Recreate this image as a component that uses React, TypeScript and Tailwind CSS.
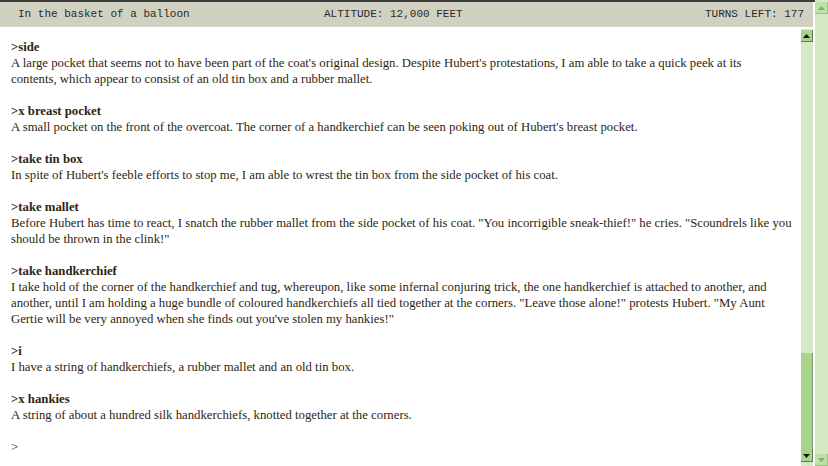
import React from "react";

type Block = { cmd: string; lines: string[] };

const blocks: Block[] = [
  {
    cmd: ">side",
    lines: [
      "A large pocket that seems not to have been part of the coat's original design. Despite Hubert's protestations, I am able to take a quick peek at its",
      "contents, which appear to consist of an old tin box and a rubber mallet.",
    ],
  },
  {
    cmd: ">x breast pocket",
    lines: [
      "A small pocket on the front of the overcoat. The corner of a handkerchief can be seen poking out of Hubert's breast pocket.",
    ],
  },
  {
    cmd: ">take tin box",
    lines: ["In spite of Hubert's feeble efforts to stop me, I am able to wrest the tin box from the side pocket of his coat."],
  },
  {
    cmd: ">take mallet",
    lines: [
      "Before Hubert has time to react, I snatch the rubber mallet from the side pocket of his coat. \"You incorrigible sneak-thief!\" he cries. \"Scoundrels like you",
      "should be thrown in the clink!\"",
    ],
  },
  {
    cmd: ">take handkerchief",
    lines: [
      "I take hold of the corner of the handkerchief and tug, whereupon, like some infernal conjuring trick, the one handkerchief is attached to another, and",
      "another, until I am holding a huge bundle of coloured handkerchiefs all tied together at the corners. \"Leave those alone!\" protests Hubert. \"My Aunt",
      "Gertie will be very annoyed when she finds out you've stolen my hankies!\"",
    ],
  },
  {
    cmd: ">i",
    lines: ["I have a string of handkerchiefs, a rubber mallet and an old tin box."],
  },
  {
    cmd: ">x hankies",
    lines: ["A string of about a hundred silk handkerchiefs, knotted together at the corners."],
  },
];

function ScrollBtn({ up, dim }: { up?: boolean; dim?: boolean }) {
  return (
    <div
      className={
        "flex items-center justify-center border-r border-b shrink-0 " +
        (dim ? "bg-[#bfe0a8] border-[#9cc487]" : "bg-[#a8d48c] border-[#5f7d52]")
      }
      style={{ width: "100%", height: 12 }}
    >
      <svg width="7" height="4" viewBox="0 0 7 4">
        {up ? (
          <polygon points="3.5,0 7,4 0,4" fill={dim ? "#7fb069" : "#111"} />
        ) : (
          <polygon points="0,0 7,0 3.5,4" fill={dim ? "#7fb069" : "#111"} />
        )}
      </svg>
    </div>
  );
}

export default function App() {
  const mono = { fontFamily: '"Liberation Mono", "Courier New", monospace' };
  const serif = { fontFamily: '"Liberation Serif", "Times New Roman", serif' };
  return (
    <div className="flex w-[828px] h-[466px] bg-white overflow-hidden">
      <div className="flex flex-col w-[815px] h-full shrink-0">
        <div className="h-[2px] bg-[#3c3c3c]" />
        <div
          className="flex items-center h-[25px] mr-[2px] bg-[#d1d1c1] text-[11px] text-[#2a2a2a]"
          style={mono}
        >
          <div className="w-[324px] pl-[18px] whitespace-pre">In the basket of a balloon</div>
          <div className="whitespace-pre">ALTITUDE: 12,000 FEET</div>
          <div className="flex-1 text-right pr-[9px] whitespace-pre">TURNS LEFT: 177</div>
        </div>
        <div className="flex flex-1 pt-[2px] min-h-0">
          <div
            className="flex-1 min-w-0 overflow-hidden pl-[11px] pt-[10px] text-[12.75px] leading-[16px] text-[#2e1f12]"
            style={serif}
          >
            {blocks.map((b, i) => (
              <div key={i} className="mb-[16px]">
                <div className="font-bold whitespace-nowrap">{b.cmd}</div>
                {b.lines.map((l, j) => (
                  <div key={j} className="whitespace-nowrap">{l}</div>
                ))}
              </div>
            ))}
            <div>&gt;</div>
          </div>
          <div className="w-[12px] shrink-0 mr-[2px] flex flex-col bg-[#d5e9c6] pt-[1px] pb-[4px]">
            <ScrollBtn up />
            <div className="flex-1" />
            <div className="h-[97px] bg-[#a8d48c] border-r border-[#7a9c6a]" />
            <ScrollBtn />
          </div>
        </div>
      </div>
      <div className="w-[13px] shrink-0 h-full flex flex-col bg-[#d5e9c6] pt-[2px]">
        <ScrollBtn up dim />
        <div className="flex-1" />
        <ScrollBtn dim />
      </div>
    </div>
  );
}
